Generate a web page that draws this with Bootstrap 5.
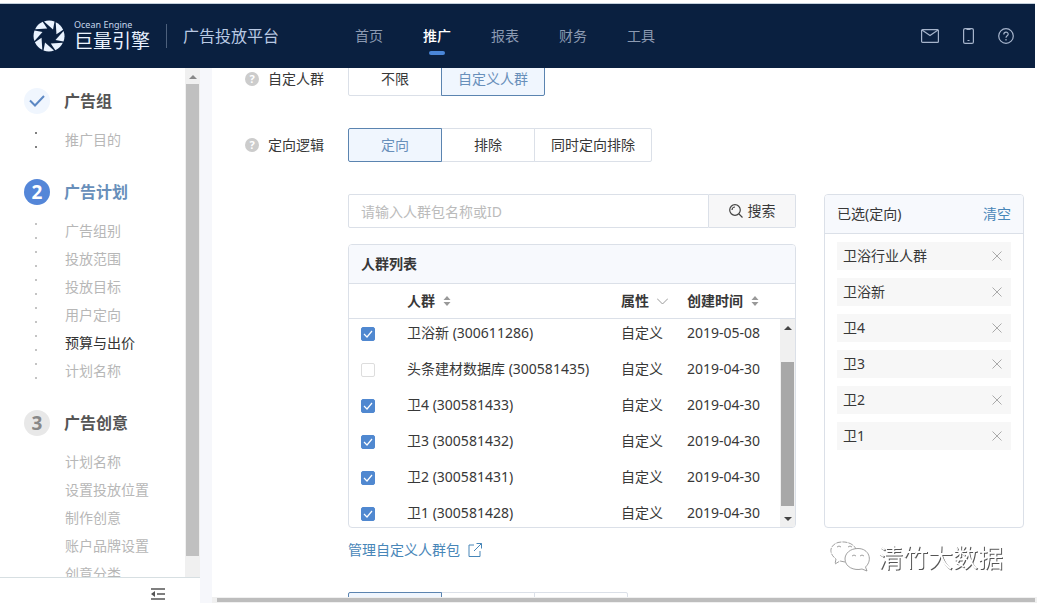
<!DOCTYPE html>
<html lang="zh-CN">
<head>
<meta charset="utf-8">
<meta name="viewport" content="width=device-width, initial-scale=1">
<title>广告投放平台</title>
<link href="https://cdn.jsdelivr.net/npm/bootstrap@5.3.0/dist/css/bootstrap.min.css" rel="stylesheet">
<style>
  :root { --line: #dbe0e8; --blue: #5c8fd6; --link: #4886b8; --steel: #688fba; --tint: #f0f6fe; --head: #f7f9fd; }
  body { font: 14px/20px "Noto Sans", "Noto Sans CJK SC", sans-serif; color: #383838; background: #fff; }
  button, input { font: inherit; color: inherit; }
  svg { flex: none; display: block; }
  .topbar { height: 64px; background: #0a2040; padding: 0 21px 0 33px; margin: 4px 2px 0 0; box-shadow: 0 -1px #c3d0dc; }
  .brand { margin-left: 9px; }
  .brand-en { font-size: 9px; line-height: 12px; color: #c5d5ea; }
  .brand-cn { font-family: "Liberation Sans", "Noto Sans CJK SC", sans-serif; font-size: 19px; line-height: 22px; color: #eaf3ff; }
  .brand-sep { width: 1px; height: 24px; background: #4d607c; margin: 0 16px; }
  .platform { font-size: 16px; color: #b9c9e3; }
  .menu { gap: 40px; margin-left: 76px; }
  .menu a { color: #8c9ab2; text-decoration: none; position: relative; }
  .menu a.active { color: #fff; font-weight: 500; }
  .menu a.active::after { content: ""; position: absolute; left: 6px; right: 6px; bottom: -9px; height: 4px; border-radius: 2px; background: #4a86d8; }
  .tools { gap: 24px; color: #a6b4cb; }
  .tools button, .plain { background: none; border: 0; padding: 0; }
  .side { width: 200px; flex: none; }
  .steps { padding: 20px 0 0 24px; }
  .step-title { font-size: 16px; line-height: 26px; font-weight: 700; gap: 14px; color: #555; margin: 0; }
  .step-dot { width: 26px; height: 26px; border-radius: 50%; background: #e8e8e8; color: #888; font-size: 19px; display: flex; align-items: center; justify-content: center; }
  .step-dot.done { background: var(--tint); }
  .step-dot.now { background: #5486d8; color: #fff; }
  .now-title { color: var(--steel); }
  .sub { list-style: none; padding: 0 0 0 41px; margin: 12px 0 25px; line-height: 28px; color: #b7b7b7; }
  .sub a { color: inherit; text-decoration: none; }
  .sub a.here { color: #333; }
  .dotted { background: linear-gradient(transparent 6px, #c4c4c4 6px, #c4c4c4 8px, transparent 8px) 11px 0 / 2px 14px repeat-y; }
  .dotted.dark { background-image: linear-gradient(transparent 6px, #808080 6px, #808080 8px, transparent 8px); }
  .bar { width: 15px; background: #f0f0f0; flex: none; display: flex; flex-direction: column; align-items: center; }
  .thumb { width: 13px; background: #c0c0c0; margin-bottom: 21px; }
  .up, .down { border: 4px solid transparent; }
  .up { border-bottom-color: #888; border-top: 0; margin: 7px 0 5px; }
  .down { border-top-color: #444; border-bottom: 0; margin: 11px 0 6px; }
  .side-foot { height: 26px; border-top: 1px solid #d7dfe2; padding: 10px 35px 0 0; }
  .gutter { width: 12px; background: #f6f7fb; flex: none; }
  .form-area { padding: 0 13px 0 33px; margin-top: -6px; }
  .form-line { gap: 24px; margin-bottom: 32px; }
  .form-line .name { width: 79px; gap: 9px; flex: none; }
  .help { width: 14px; height: 14px; border-radius: 50%; background: #ccc; color: #fff; font-size: 11px; line-height: 14px; font-weight: 700; text-align: center; }
  .seg button { height: 34px; min-width: 94px; border: 1px solid var(--line); background: #fff; padding: 0 16px; margin-left: -1px; }
  .seg button:first-child { margin-left: 0; border-radius: 2px 0 0 2px; }
  .seg button:last-child { border-radius: 0 2px 2px 0; }
  .seg button.on { border-color: #5b84b0; background: var(--tint); color: var(--steel); z-index: 1; }
  .indent { margin-left: 103px; gap: 28px; }
  .search input { height: 34px; border: 1px solid var(--line); border-radius: 2px 0 0 2px; padding: 0 12px; min-width: 0; }
  .search input::placeholder { color: #bbb; opacity: 1; }
  .search button { width: 87px; border: 1px solid var(--line); border-left: 0; background: #f7f7f8; gap: 5px; border-radius: 0 2px 2px 0; }
  .panel { border: 1px solid var(--line); border-radius: 4px; overflow: hidden; background: #fff; }
  .panel-head { height: 39px; background: var(--head); border-bottom: 1px solid var(--line); padding: 0 12px; }
  .people { width: 100%; table-layout: fixed; }
  .people th { height: 34px; font-weight: 700; padding: 0; }
  .people td { height: 36px; padding: 0; }
  .people td:first-child { padding-left: 12px; }
  .c1 { width: 58px; } .c3 { width: 66px; } .c4 { width: 108px; }
  .c4-body { width: 93px; }
  .list-body { height: 209px; border-top: 1px solid var(--line); overflow: hidden; }
  .list-body .people { margin-top: -4px; }
  .list-body .thumb { background: #a8a8a8; margin: 27px 0 0; }
  .list-body .up { border-bottom-color: #444; }
  .tick { appearance: none; width: 14px; height: 14px; border: 1px solid #ddd; border-radius: 2px; display: block; margin: 2px 0 0; background: #fff; }
  .tick:checked { border-color: #5088d0; background: #5088d0 url("data:image/svg+xml,%3Csvg xmlns='http://www.w3.org/2000/svg' viewBox='0 0 12 12'%3E%3Cpath d='M2 6l3 3 5-6' fill='none' stroke='white' stroke-width='1.2'/%3E%3C/svg%3E"); }
  .chosen { width: 200px; flex: none; }
  .chosen ul { list-style: none; margin: 0; padding: 8px 12px; display: grid; gap: 8px; }
  .chosen li { height: 28px; background: #f7f7f7; padding: 0 9px 0 6px; display: flex; align-items: center; justify-content: space-between; }
  .text-link { color: var(--link); text-decoration: none; }
  .manage { margin: 12px 0 32px 103px; gap: 8px; }
  .hbar { height: 6px; background: #f0f0f0; padding: 1px 2px 1px 5px; }
  .hbar div { height: 4px; background: #bdbdbd; }
  .watermark { position: fixed; right: 34px; bottom: 29px; gap: 7px; font-size: 25px; line-height: 34px; color: #fff; text-shadow: 1px 1px #555; }
</style>
</head>
<body class="vh-100 d-flex flex-column overflow-hidden">
<header class="topbar d-flex align-items-center flex-shrink-0">
  <svg width="32" height="32" viewBox="-16 -16 32 32" fill="#eaf3ff" aria-hidden="true">
    <defs><path id="blade" d="M-5-14.500Q0-16.500 5.500-14.500L4-6.500Z"/></defs>
    <use href="#blade"/><use href="#blade" transform="rotate(45)"/><use href="#blade" transform="rotate(90)"/><use href="#blade" transform="rotate(135)"/><use href="#blade" transform="rotate(180)"/><use href="#blade" transform="rotate(225)"/><use href="#blade" transform="rotate(270)"/><use href="#blade" transform="rotate(315)"/>
  </svg>
  <div class="brand text-nowrap"><div class="brand-en">Ocean Engine</div><div class="brand-cn">巨量引擎</div></div>
  <div class="brand-sep"></div>
  <div class="platform text-nowrap">广告投放平台</div>
  <nav class="menu d-flex text-nowrap">
    <a href="#">首页</a><a href="#" class="active">推广</a><a href="#">报表</a><a href="#">财务</a><a href="#">工具</a>
  </nav>
  <div class="tools d-flex align-items-center ms-auto">
    <button aria-label="消息"><svg width="18" height="14" viewBox="0 0 18 14" fill="none" stroke="currentColor" stroke-width="1.2"><rect x=".6" y=".6" width="16.8" height="12.8" rx="1"/><path d="M1 1l8 5.5L17 1"/></svg></button>
    <button aria-label="手机"><svg width="11" height="16" viewBox="0 0 11 16" fill="none" stroke="currentColor" stroke-width="1.2"><rect x=".6" y=".6" width="9.8" height="14.8" rx="1.5"/><path d="M3.500 1.500h4M4.500 12.500h2"/></svg></button>
    <button aria-label="帮助"><svg width="16" height="16" viewBox="0 0 16 16" fill="none" stroke="currentColor" stroke-width="1.2"><circle cx="8" cy="8" r="7.300"/><path d="M5.800 6.400c0-3 4.400-3 4.400-.2 0 1.600-2.200 1.700-2.200 3.600M8 11v1.400"/></svg></button>
  </div>
</header>

<div class="d-flex flex-grow-1 overflow-hidden">
  <aside class="side d-flex flex-column">
    <div class="d-flex flex-grow-1 overflow-hidden">
      <div class="steps flex-grow-1 text-nowrap">
        <h2 class="step-title d-flex"><span class="step-dot done"><svg width="18" height="14" viewBox="0 0 18 14" fill="none" stroke="#5c88c4" stroke-width="2"><path d="M2 6.500l5 5L16 2"/></svg></span>广告组</h2>
        <ul class="sub dotted dark"><li><a href="#">推广目的</a></li></ul>
        <h2 class="step-title now-title d-flex"><span class="step-dot now">2</span>广告计划</h2>
        <ul class="sub dotted">
          <li><a href="#">广告组别</a></li><li><a href="#">投放范围</a></li><li><a href="#">投放目标</a></li><li><a href="#">用户定向</a></li><li><a href="#" class="here">预算与出价</a></li><li><a href="#">计划名称</a></li>
        </ul>
        <h2 class="step-title d-flex"><span class="step-dot">3</span>广告创意</h2>
        <ul class="sub">
          <li><a href="#">计划名称</a></li><li><a href="#">设置投放位置</a></li><li><a href="#">制作创意</a></li><li><a href="#">账户品牌设置</a></li><li><a href="#">创意分类</a></li>
        </ul>
      </div>
      <div class="bar"><div class="up"></div><div class="thumb flex-grow-1"></div></div>
    </div>
    <div class="side-foot d-flex justify-content-end align-items-start flex-shrink-0">
      <button class="plain" aria-label="收起"><svg width="15" height="12" viewBox="0 0 15 12" stroke="#555" stroke-width="1.300"><path d="M1 1h14M7 6h8M1 11h14"/><path d="M5 3v6L1 6z" fill="#555" stroke="none"/></svg></button>
    </div>
  </aside>
  <div class="gutter"></div>

  <div class="flex-grow-1 d-flex flex-column overflow-hidden">
    <main class="flex-grow-1 overflow-hidden">
      <div class="form-area">
        <div class="form-line d-flex align-items-center">
          <div class="name d-flex align-items-center"><span class="help">?</span>自定人群</div>
          <div class="seg btn-group" role="group" aria-label="自定人群"><button>不限</button><button class="on">自定义人群</button></div>
        </div>
        <div class="form-line d-flex align-items-center">
          <div class="name d-flex align-items-center"><span class="help">?</span>定向逻辑</div>
          <div class="seg btn-group" role="group" aria-label="定向逻辑"><button class="on">定向</button><button>排除</button><button>同时定向排除</button></div>
        </div>
        <div class="indent d-flex">
          <div class="flex-grow-1">
            <form class="search d-flex mb-3">
              <input class="flex-grow-1" type="text" placeholder="请输入人群包名称或ID" aria-label="请输入人群包名称或ID">
              <button type="button" class="d-flex align-items-center justify-content-center"><svg width="14" height="14" viewBox="0 0 14 14" fill="none" stroke="#444" stroke-width="1.200"><circle cx="6" cy="6" r="5.300"/><path d="M10 10l3.500 3.500M3 6a3 3 0 0 1 3-3"/></svg>搜索</button>
            </form>
            <section class="panel">
              <div class="panel-head d-flex align-items-center fw-bold">人群列表</div>
              <table class="people">
                <colgroup><col class="c1"><col><col class="c3"><col class="c4"></colgroup>
                <thead><tr><th></th>
                  <th><span class="d-flex align-items-center gap-2">人群 <svg width="8" height="10" viewBox="0 0 8 10" fill="#999"><path d="M4 0l3.500 4h-7zM4 10l3.500-4h-7z"/></svg></span></th>
                  <th><span class="d-flex align-items-center gap-2">属性 <svg width="11" height="7" viewBox="0 0 11 7" fill="none" stroke="#999"><path d="M0 .5l5.500 5.500L11 .5"/></svg></span></th>
                  <th><span class="d-flex align-items-center gap-2">创建时间 <svg width="8" height="10" viewBox="0 0 8 10" fill="#999"><path d="M4 0l3.500 4h-7zM4 10l3.500-4h-7z"/></svg></span></th>
                </tr></thead>
              </table>
              <div class="list-body d-flex">
                <div class="flex-grow-1 overflow-hidden">
                  <table class="people">
                    <colgroup><col class="c1"><col><col class="c3"><col class="c4-body"></colgroup>
                    <tbody>
                      <tr><td><input class="tick" type="checkbox" id="p1" checked></td><td><label for="p1">卫浴新 (300611286)</label></td><td>自定义</td><td>2019-05-08</td></tr>
                      <tr><td><input class="tick" type="checkbox" id="p2"></td><td><label for="p2">头条建材数据库 (300581435)</label></td><td>自定义</td><td>2019-04-30</td></tr>
                      <tr><td><input class="tick" type="checkbox" id="p3" checked></td><td><label for="p3">卫4 (300581433)</label></td><td>自定义</td><td>2019-04-30</td></tr>
                      <tr><td><input class="tick" type="checkbox" id="p4" checked></td><td><label for="p4">卫3 (300581432)</label></td><td>自定义</td><td>2019-04-30</td></tr>
                      <tr><td><input class="tick" type="checkbox" id="p5" checked></td><td><label for="p5">卫2 (300581431)</label></td><td>自定义</td><td>2019-04-30</td></tr>
                      <tr><td><input class="tick" type="checkbox" id="p6" checked></td><td><label for="p6">卫1 (300581428)</label></td><td>自定义</td><td>2019-04-30</td></tr>
                    </tbody>
                  </table>
                </div>
                <div class="bar"><div class="up"></div><div class="thumb flex-grow-1"></div><div class="down"></div></div>
              </div>
            </section>
          </div>
          <section class="panel chosen">
            <div class="panel-head d-flex align-items-center justify-content-between"><span>已选(定向)</span><a class="text-link" href="#">清空</a></div>
            <ul id="chosen"></ul>
          </section>
        </div>
        <a class="manage text-link d-inline-flex align-items-center" href="#">管理自定义人群包 <svg width="14" height="14" viewBox="0 0 14 14" fill="none" stroke="currentColor"><path d="M6 2H1v11.500h11V8M8.500.5h5v5M13.500.5L6 8"/></svg></a>
        <div class="form-line d-flex"><div class="name"></div><div class="seg btn-group" role="group" aria-label="更多"><button class="on" aria-label="选项一"></button><button aria-label="选项二"></button><button aria-label="选项三"></button></div></div>
      </div>
    </main>
    <div class="hbar flex-shrink-0"><div></div></div>
  </div>
</div>

<div class="watermark d-flex align-items-center">
  <svg width="41" height="32" viewBox="0 0 41 32" fill="#fff" stroke="#888" stroke-width=".8"><path d="M15 21l-5-1-5 3 1-5C-2 12 0 4 8 1.500 16-.5 25 3 26 9" stroke-dasharray="5 1"/><path d="M28 7.500c-8 0-13 5-13 10.500 0 8 9 12 17 10l5 2-1.500-4C43 19 39 7.500 28 7.500z"/><path d="M7 6q2-2 4 0M18 6q2-2 4 0M22 15q2-2 4 0M30 15q2-2 4 0" fill="none"/></svg>
  <span>清竹大数据</span>
</div>

<script src="https://cdn.jsdelivr.net/npm/bootstrap@5.3.0/dist/js/bootstrap.bundle.min.js"></script>
<script>
  document.getElementById('chosen').innerHTML = ['卫浴行业人群', '卫浴新', '卫4', '卫3', '卫2', '卫1'].map(n =>
    `<li>${n}<button class="plain" aria-label="移除${n}"><svg width="10" height="10" viewBox="0 0 10 10" stroke="#aaa"><path d="M.5.5l9 9M9.500.5l-9 9"/></svg></button></li>`).join('');
</script>
</body>
</html>
